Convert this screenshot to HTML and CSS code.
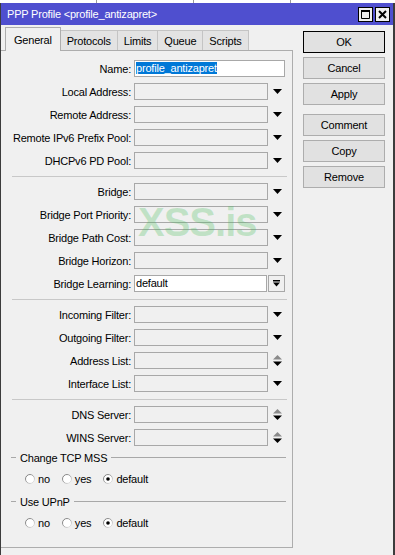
FILE: index.html
```html
<!DOCTYPE html>
<html lang="en">
<head>
    <meta charset="UTF-8">
    <meta name="viewport" content="width=device-width, initial-scale=1.0">
    <title>PPP Profile</title>
    <link rel="stylesheet" href="styles.css">
</head>
<body>
    <div class="backdrop"><span></span><span></span><span></span></div>
    <div class="window">
        <div class="titlebar">
            <span class="title">PPP Profile &lt;profile_antizapret&gt;</span>
            <div class="title-btns">
                <span class="tbtn">
                    <svg width="9" height="9" viewBox="0 0 9 9"><path d="M0.5 0.5h8v8h-8z M0.5 1.5h8" fill="none" stroke="#000" stroke-width="1"/><rect x="0" y="0" width="9" height="2" fill="#000"/></svg>
                </span>
                <span class="tbtn">
                    <svg width="9" height="9" viewBox="0 0 9 9"><path d="M1 1L8 8M8 1L1 8" stroke="#000" stroke-width="2"/></svg>
                </span>
            </div>
        </div>
        <div class="body">
            <div class="main">
                <div class="tabs">
                    <span class="tab active">General</span>
                    <span class="tab">Protocols</span>
                    <span class="tab">Limits</span>
                    <span class="tab">Queue</span>
                    <span class="tab">Scripts</span>
                </div>
                <div class="panel">
                    <div class="group">
                        <div class="row">
                            <label>Name:</label>
                            <div class="field white wide"><span class="selected">profile_antizapret</span></div>
                        </div>
                        <div class="row">
                            <label>Local Address:</label>
                            <div class="field"></div>
                            <span class="arrow"><svg width="9" height="5" viewBox="0 0 9 5"><path d="M0 0h9L4.5 5z" fill="#000"/></svg></span>
                        </div>
                        <div class="row">
                            <label>Remote Address:</label>
                            <div class="field"></div>
                            <span class="arrow"><svg width="9" height="5" viewBox="0 0 9 5"><path d="M0 0h9L4.5 5z" fill="#000"/></svg></span>
                        </div>
                        <div class="row">
                            <label>Remote IPv6 Prefix Pool:</label>
                            <div class="field"></div>
                            <span class="arrow"><svg width="9" height="5" viewBox="0 0 9 5"><path d="M0 0h9L4.5 5z" fill="#000"/></svg></span>
                        </div>
                        <div class="row">
                            <label>DHCPv6 PD Pool:</label>
                            <div class="field"></div>
                            <span class="arrow"><svg width="9" height="5" viewBox="0 0 9 5"><path d="M0 0h9L4.5 5z" fill="#000"/></svg></span>
                        </div>
                    </div>
                    <div class="sep"></div>
                    <div class="group">
                        <div class="row">
                            <label>Bridge:</label>
                            <div class="field"></div>
                            <span class="arrow"><svg width="9" height="5" viewBox="0 0 9 5"><path d="M0 0h9L4.5 5z" fill="#000"/></svg></span>
                        </div>
                        <div class="row">
                            <label>Bridge Port Priority:</label>
                            <div class="field"></div>
                            <span class="arrow"><svg width="9" height="5" viewBox="0 0 9 5"><path d="M0 0h9L4.5 5z" fill="#000"/></svg></span>
                        </div>
                        <div class="row">
                            <label>Bridge Path Cost:</label>
                            <div class="field"></div>
                            <span class="arrow"><svg width="9" height="5" viewBox="0 0 9 5"><path d="M0 0h9L4.5 5z" fill="#000"/></svg></span>
                        </div>
                        <div class="row">
                            <label>Bridge Horizon:</label>
                            <div class="field"></div>
                            <span class="arrow"><svg width="9" height="5" viewBox="0 0 9 5"><path d="M0 0h9L4.5 5z" fill="#000"/></svg></span>
                        </div>
                        <div class="row">
                            <label>Bridge Learning:</label>
                            <div class="combo">
                                <div class="field white">default</div>
                                <span class="combo-btn"><svg width="7" height="7" viewBox="0 0 7 7"><rect x="0" y="0" width="7" height="1.5" fill="#000"/><path d="M0 2.5h7L3.5 6.5z" fill="#000"/></svg></span>
                            </div>
                        </div>
                    </div>
                    <div class="sep"></div>
                    <div class="group">
                        <div class="row">
                            <label>Incoming Filter:</label>
                            <div class="field"></div>
                            <span class="arrow"><svg width="9" height="5" viewBox="0 0 9 5"><path d="M0 0h9L4.5 5z" fill="#000"/></svg></span>
                        </div>
                        <div class="row">
                            <label>Outgoing Filter:</label>
                            <div class="field"></div>
                            <span class="arrow"><svg width="9" height="5" viewBox="0 0 9 5"><path d="M0 0h9L4.5 5z" fill="#000"/></svg></span>
                        </div>
                        <div class="row">
                            <label>Address List:</label>
                            <div class="field"></div>
                            <span class="arrow"><svg width="9" height="11" viewBox="0 0 9 11"><path d="M0 4.5h9L4.5 0z" fill="#8a8a8a"/><path d="M0 6.5h9L4.5 11z" fill="#000"/></svg></span>
                        </div>
                        <div class="row">
                            <label>Interface List:</label>
                            <div class="field"></div>
                            <span class="arrow"><svg width="9" height="5" viewBox="0 0 9 5"><path d="M0 0h9L4.5 5z" fill="#000"/></svg></span>
                        </div>
                    </div>
                    <div class="sep"></div>
                    <div class="group">
                        <div class="row">
                            <label>DNS Server:</label>
                            <div class="field"></div>
                            <span class="arrow"><svg width="9" height="11" viewBox="0 0 9 11"><path d="M0 4.5h9L4.5 0z" fill="#8a8a8a"/><path d="M0 6.5h9L4.5 11z" fill="#000"/></svg></span>
                        </div>
                        <div class="row">
                            <label>WINS Server:</label>
                            <div class="field"></div>
                            <span class="arrow"><svg width="9" height="11" viewBox="0 0 9 11"><path d="M0 4.5h9L4.5 0z" fill="#8a8a8a"/><path d="M0 6.5h9L4.5 11z" fill="#000"/></svg></span>
                        </div>
                    </div>

                    <div class="legend"><span>Change TCP MSS</span></div>
                    <div class="radios">
                        <span class="radio"><svg width="10" height="10" viewBox="0 0 10 10"><circle cx="5" cy="5" r="4.5" fill="#fff" stroke="url(#rim)"/></svg>no</span>
                        <span class="radio"><svg width="10" height="10" viewBox="0 0 10 10"><circle cx="5" cy="5" r="4.5" fill="#fff" stroke="url(#rim)"/></svg>yes</span>
                        <span class="radio"><svg width="10" height="10" viewBox="0 0 10 10"><circle cx="5" cy="5" r="4.5" fill="#fff" stroke="url(#rim)"/><circle cx="5" cy="5" r="1.8" fill="#000"/></svg>default</span>
                    </div>

                    <div class="legend"><span>Use UPnP</span></div>
                    <div class="radios">
                        <span class="radio"><svg width="10" height="10" viewBox="0 0 10 10"><circle cx="5" cy="5" r="4.5" fill="#fff" stroke="url(#rim)"/></svg>no</span>
                        <span class="radio"><svg width="10" height="10" viewBox="0 0 10 10"><circle cx="5" cy="5" r="4.5" fill="#fff" stroke="url(#rim)"/></svg>yes</span>
                        <span class="radio"><svg width="10" height="10" viewBox="0 0 10 10"><circle cx="5" cy="5" r="4.5" fill="#fff" stroke="url(#rim)"/><circle cx="5" cy="5" r="1.8" fill="#000"/></svg>default</span>
                    </div>

                    <div class="watermark">XSS.is</div>
                </div>
            </div>
            <div class="actions">
                <span class="btn default">OK</span>
                <span class="btn">Cancel</span>
                <span class="btn">Apply</span>
                <span class="btn spaced">Comment</span>
                <span class="btn">Copy</span>
                <span class="btn">Remove</span>
            </div>
        </div>
    </div>

    <!-- shared gradient for the radio rims -->
    <svg width="0" height="0" class="defs">
        <defs>
            <linearGradient id="rim" x1="0" y1="0" x2="1" y2="1">
                <stop offset="0" stop-color="#6e6e6e"/>
                <stop offset="0.5" stop-color="#a8a8a8"/>
                <stop offset="1" stop-color="#f4f4f4"/>
            </linearGradient>
        </defs>
    </svg>
</body>
</html>
```

FILE: styles.css
```css
body {
    margin: 0;
    font-family: "Liberation Sans", Arial, sans-serif;
    font-size: 11px;
    letter-spacing: -0.2px;
    color: #000;
    background: #fff;
}
.defs {
    position: absolute;
}

/* bit of the list window behind the dialog */
.backdrop {
    height: 3px;
    display: flex;
    background: #fff;
}
.backdrop span {
    width: 96px;
    border-right: 1px solid #9a9a9a;
}

.window {
    height: 552px;
    box-sizing: border-box;
    border-left: 1px solid #3c3c3c;
    border-right: 2px solid #3c3c3c;
    background: #f0f0f0;
    display: flex;
    flex-direction: column;
}
.titlebar {
    height: 22px;
    flex: none;
    display: flex;
    align-items: center;
    padding: 0 3px 0 6px;
    background: #4f4fcf;
    color: #fff;
}
.title-btns {
    margin-left: auto;
    display: flex;
    gap: 2px;
}
.tbtn {
    width: 15px;
    height: 15px;
    box-sizing: border-box;
    border: 1px solid #000;
    background: #f0f0f0;
    display: flex;
    align-items: center;
    justify-content: center;
}

.body {
    flex: 1;
    display: flex;
}
.main {
    width: 292px;
    display: flex;
    flex-direction: column;
}
.tabs {
    height: 23px;
    margin-top: 2px;
    padding-left: 4px;
    display: flex;
    align-items: flex-end;
}
.tab {
    height: 20px;
    box-sizing: border-box;
    padding: 0 6px;
    margin-left: -1px;
    display: flex;
    align-items: center;
    border: 1px solid #c4c4c4;
    border-bottom: none;
    background: #e3e3e3;
}
.tab.active {
    height: 24px;
    margin-left: 0;
    margin-bottom: -1px;
    padding: 0 8px;
    position: relative;
    z-index: 1;
    border-color: #adadad;
    background: #f0f0f0;
}
.panel {
    flex: 1;
    position: relative;
    margin-bottom: 7px;
    padding-top: 9px;
    border-top: 1px solid #adadad;
    border-right: 1px solid #adadad;
    border-bottom: 1px solid #adadad;
}

.group {
    display: flex;
    flex-direction: column;
    gap: 6px;
}
.row {
    height: 17px;
    display: grid;
    grid-template-columns: 133px 134px 25px;
    align-items: center;
}
.row label {
    text-align: right;
    padding-right: 3px;
    white-space: nowrap;
}
.field {
    height: 17px;
    box-sizing: border-box;
    border: 1px solid #a8a8a8;
    background: #f0f0f0;
    padding-left: 1px;
    line-height: 15px;
}
.field.white {
    background: #fff;
}
.field.wide {
    grid-column: span 2;
    width: 151px;
}
.selected {
    background: #0078d7;
    color: #fff;
}
.arrow {
    padding-left: 5px;
    display: flex;
    align-items: center;
}
.combo {
    grid-column: span 2;
    display: flex;
    gap: 1px;
}
.combo .field {
    width: 133px;
}
.combo-btn {
    width: 17px;
    height: 17px;
    box-sizing: border-box;
    border: 1px solid #a8a8a8;
    background: #f0f0f0;
    display: flex;
    align-items: center;
    justify-content: center;
}
.sep {
    height: 1px;
    background: #c8c8c8;
    margin: 7px 5px 6px 11px;
}

.legend {
    height: 13px;
    margin-top: 5px;
    display: flex;
    align-items: center;
}
.radios + .legend {
    margin-top: 8px;
}
.legend::before,
.legend::after {
    content: "";
    height: 1px;
    background: #a8a8a8;
}
.legend::before {
    width: 5px;
    margin-left: 10px;
}
.legend::after {
    flex: 1;
    margin-right: 6px;
}
.legend span {
    margin: 0 4px;
}
.radios {
    height: 17px;
    margin-top: 6px;
    padding-left: 24px;
    display: flex;
    align-items: center;
    gap: 12px;
}
.radio {
    display: flex;
    align-items: center;
    gap: 3px;
}

.watermark {
    position: absolute;
    left: 137px;
    top: 151px;
    font-size: 40px;
    line-height: 40px;
    font-weight: bold;
    letter-spacing: -1px;
    color: rgba(70, 190, 90, 0.28);
    pointer-events: none;
}

.actions {
    width: 82px;
    margin: 6px 0 0 10px;
    display: flex;
    flex-direction: column;
    gap: 4px;
}
.btn {
    height: 22px;
    box-sizing: border-box;
    border: 1px solid #adadad;
    background: #e1e1e1;
    display: flex;
    align-items: center;
    justify-content: center;
}
.btn.default {
    border-color: #000;
}
.btn.spaced {
    margin-top: 5px;
}
```
